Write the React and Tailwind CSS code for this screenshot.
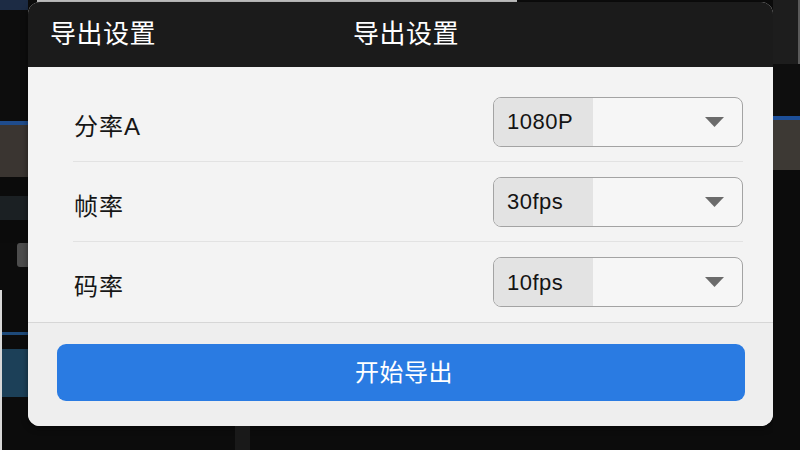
// Export settings dialog over a dimmed editor window
const FONT = { fontFamily: '"Liberation Sans", "Noto Sans CJK SC", sans-serif' };

function Caret() {
  return (
    <svg width="19" height="10" viewBox="0 0 19 10" className="shrink-0">
      <path d="M0 0 H19 L9.5 10 Z" fill="#6b6b6b" />
    </svg>
  );
}

function SelectBox({ value }) {
  return (
    <div className="flex h-[50px] w-[250px] overflow-hidden rounded-[8px] border-[1.5px] border-[#a3a3a3] bg-[#f6f6f6]">
      <div className="flex w-[99px] items-center bg-[#e3e3e3] pl-[13px] text-[22px] tracking-[0.5px] text-[#141414]">
        {value}
      </div>
      <div className="flex flex-1 items-center justify-end pr-[18px]">
        <Caret />
      </div>
    </div>
  );
}

function SettingRow({ label, value, last }) {
  return (
    <div
      className={
        "flex h-[80px] items-center justify-between " +
        (last ? "" : "border-b border-[#e2e2e2]")
      }
    >
      <span className="mt-[10px] pl-[1px] text-[24px] tracking-[1px] text-[#161616]">{label}</span>
      <SelectBox value={value} />
    </div>
  );
}

export default function App() {
  const rows = [
    { label: "分率A", value: "1080P" },
    { label: "帧率", value: "30fps" },
    { label: "码率", value: "10fps" },
  ];

  return (
    <div className="flex h-[450px] w-[800px] overflow-hidden bg-[#0c0c0c]" style={FONT}>
      {/* left strip of the editor behind */}
      <div className="flex w-[28px] flex-col">
        <div className="h-[10px] bg-[#1c2b44]" />
        <div className="h-[111px] bg-[#0d0d0d]" />
        <div className="h-[4px] bg-[#1f4c8c]" />
        <div className="h-[52px] bg-[#3a3531]" />
        <div className="h-[19px] bg-[#0b0b0b]" />
        <div className="h-[24px] bg-[#1b2023]" />
        <div className="h-[23px] bg-[#0b0b0b]" />
        <div className="flex h-[24px] justify-end">
          <div className="w-[11px] rounded-l-[3px] bg-[#4d4d4d]" />
        </div>
        <div className="h-[23px]" />
        <div className="flex-1 border-l-2 border-[#d8d8d8] pt-[42px]">
          <div className="h-[3px] bg-[#1e4a7a]" />
          <div className="mt-[14px] h-[48px] bg-[#1c4058]" />
        </div>
      </div>

      {/* middle column holding the dialog */}
      <div className="flex w-[745px] flex-col">
        <div className="flex h-[2px]">
          <div className="w-[9px]" />
          <div className="w-[480px] bg-[#c9c9c9]" />
        </div>

        <div className="flex h-[424px] flex-col overflow-hidden rounded-[12px] bg-[#f3f3f3] shadow-[0_2px_6px_rgba(0,0,0,0.5)]">
          <div className="flex h-[65px] shrink-0 items-center bg-[#1b1b1b] pl-[22px] text-[26px] tracking-[0.5px] text-white">
            <span>导出设置</span>
            <span className="ml-[197px]">导出设置</span>
          </div>

          <div className="ml-[45px] mr-[30px] pt-[15px]">
            {rows.map((r, i) => (
              <SettingRow key={r.label} label={r.label} value={r.value} last={i === rows.length - 1} />
            ))}
          </div>

          <div className="flex flex-1 flex-col border-t border-[#d6d6d6] bg-[#eeeeee] pl-[29px] pr-[28px] pt-[21px]">
            <button className="flex h-[57px] items-center justify-center rounded-[9px] bg-[#2a7be2] pl-[6px] text-[24px] tracking-[0.5px] text-white">
              开始导出
            </button>
          </div>
        </div>

        <div className="flex flex-1">
          <div className="ml-[207px] w-[15px] bg-[#191919]" />
        </div>
      </div>

      {/* right strip */}
      <div className="flex w-[27px] flex-col">
        <div className="flex h-[64px] justify-end bg-[#1d1d1d]">
          <div className="w-[2px] bg-[#5a5a5a]" />
        </div>
        <div className="h-[52px] bg-[#0e0e0e]" />
        <div className="h-[4px] bg-[#1d4f99]" />
        <div className="h-[50px] bg-[#3d3934]" />
        <div className="flex-1 bg-[#0c0c0c]" />
      </div>
    </div>
  );
}
